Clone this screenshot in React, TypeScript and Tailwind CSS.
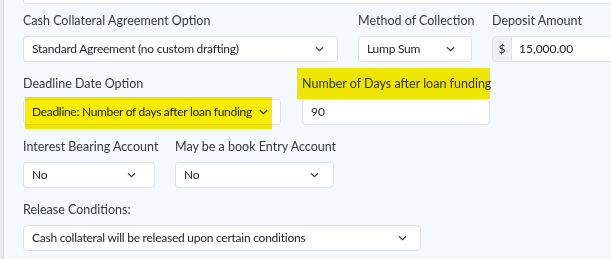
import React from 'react';

function Chevron() {
  return (
    <svg width="9" height="6" viewBox="0 0 9 6" className="shrink-0">
      <polyline points="1,1.2 4.5,4.6 8,1.2" fill="none" stroke="#343a40" strokeWidth="1.2" />
    </svg>
  );
}

function Select({ value, chevronPad = 'pr-[14px]' }: { value: string; chevronPad?: string }) {
  return (
    <div
      className={`w-full h-[26px] bg-white border border-[#dfe3e8] rounded-[4px] flex items-center justify-between pl-[8px] ${chevronPad} text-[#212529] text-[12px] tracking-[-0.25px] whitespace-nowrap overflow-hidden`}
    >
      <span>{value}</span>
      <Chevron />
    </div>
  );
}

function Label({ children }: { children: React.ReactNode }) {
  return <div className="h-[18px] mb-[6px] text-[#343a40] whitespace-nowrap">{children}</div>;
}

export default function App() {
  return (
    <div
      className="w-[611px] h-[259px] overflow-hidden flex bg-[#f5f8fc] text-[12.5px] leading-[18px]"
      style={{ fontFamily: 'Lato, "Noto Sans", sans-serif' }}
    >
      <div className="w-[4px] bg-[#e9ecef] border-r border-[#d3d7db] shrink-0" />
      <div className="flex-1 pl-[19px]">
        <div className="h-[4px] bg-white border border-t-0 border-[#dfe3e8] rounded-b-[4px] mr-[-10px]" />

        <div className="pt-[8px] flex flex-col gap-[13px]">
          {/* row 1 */}
          <div className="flex gap-[20px]">
            <div className="w-[315px] shrink-0">
              <Label>Cash Collateral Agreement Option</Label>
              <Select value="Standard Agreement (no custom drafting)" chevronPad="pr-[13px]" />
            </div>
            <div className="w-[114px] shrink-0">
              <Label>Method of Collection</Label>
              <Select value="Lump Sum" chevronPad="pr-[16px]" />
            </div>
            <div className="w-[140px] shrink-0">
              <Label>Deposit Amount</Label>
              <div className="flex h-[26px] text-[12px]">
                <div className="w-[20px] bg-[#eef0f3] border border-[#dfe3e8] rounded-l-[4px] flex items-center justify-center text-[#212529]">
                  $
                </div>
                <div className="flex-1 bg-white border border-l-0 border-[#dfe3e8] flex items-center pl-[7px] text-[#212529]">
                  15,000.00
                </div>
              </div>
            </div>
          </div>

          {/* row 2 */}
          <div className="flex gap-[21px]">
            <div className="relative w-[258px] shrink-0">
              <Label>Deadline Date Option</Label>
              <div className="w-full h-[26px] bg-white border border-[#dfe3e8] rounded-[4px] flex items-center pl-[8px] pr-[12px] gap-[7px] text-[#212529] text-[12px] tracking-[-0.3px] whitespace-nowrap overflow-hidden">
                <span>Deadline: Number of days after loan funding</span>
                <Chevron />
              </div>
              <div className="absolute left-[2px] top-[22px] w-[247px] h-[32px] bg-[#f8ec00] mix-blend-multiply" />
            </div>
            <div className="relative w-[188px] shrink-0">
              <Label>Number of Days after loan funding</Label>
              <div className="w-full h-[26px] bg-white border border-[#dfe3e8] rounded-[4px] flex items-center pl-[8px] text-[12px] text-[#212529]">
                90
              </div>
              <div className="absolute left-[-5px] top-[-7px] w-[193px] h-[31px] bg-[#f8ec00] mix-blend-multiply" />
            </div>
          </div>

          {/* row 3 */}
          <div className="flex gap-[20px]">
            <div className="w-[132px] shrink-0">
              <Label>Interest Bearing Account</Label>
              <Select value="No" chevronPad="pr-[18px]" />
            </div>
            <div className="w-[159px] shrink-0">
              <Label>May be a book Entry Account</Label>
              <Select value="No" chevronPad="pr-[14px]" />
            </div>
          </div>

          {/* row 4 */}
          <div className="w-[398px]">
            <Label>Release Conditions:</Label>
            <Select value="Cash collateral will be released upon certain conditions" chevronPad="pr-[13px]" />
          </div>
        </div>
      </div>
    </div>
  );
}
